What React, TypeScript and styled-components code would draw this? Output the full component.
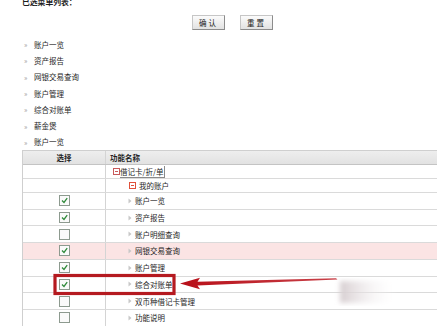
import React from "react";
import styled, { createGlobalStyle } from "styled-components";

const Global = createGlobalStyle`
  html, body { margin: 0; padding: 0; background: #fff; }
  body {
    font-family: "Noto Sans CJK SC", "DejaVu Sans", sans-serif;
    font-size: 7.5px;
    color: #1e1e1e;
    overflow: hidden;
  }
`;

const Page = styled.div`
  position: relative;
  width: 437px;
  height: 326px;
  overflow: hidden;
  padding-left: 22px;
  box-sizing: border-box;
`;

const Title = styled.div`
  margin-top: -3px;
  height: 10px;
  line-height: 10px;
  font-weight: 700;
  font-size: 7.8px;
`;

const ButtonRow = styled.div`
  display: flex;
  gap: 15px;
  margin-top: 8px;
  padding-left: 170px;
`;

const Btn = styled.button`
  width: 33px;
  height: 15px;
  padding: 0;
  font-family: inherit;
  font-size: 7.5px;
  letter-spacing: 2px;
  color: #222;
  background: linear-gradient(#fbfbfb, #e2e2e2);
  border: 1px solid #c6c6c6;
  border-right-color: #8c8c8c;
  border-bottom-color: #8c8c8c;
  line-height: 13px;
`;

const List = styled.ul`
  list-style: none;
  margin: 6px 0 0;
  padding: 0;
`;

const ListItem = styled.li`
  display: flex;
  align-items: center;
  height: 16.3px;
  gap: 5px;
  padding-left: 2px;
`;

const Bullet = styled.span`
  color: #9a9a9a;
  font-size: 7px;
  width: 5px;
`;

const Table = styled.div`
  width: 520px;
  border-top: 1px solid #cfcfcf;
  border-left: 1px solid #cfcfcf;
`;

const Row = styled.div<{ $h: number; $pink?: boolean; $head?: boolean }>`
  display: grid;
  grid-template-columns: 83px 1fr;
  height: ${(p) => p.$h}px;
  border-bottom: 1px solid ${(p) => (p.$head ? "#c4c4c4" : "#dadada")};
  background: ${(p) =>
    p.$head ? "linear-gradient(#eeeeee, #e2e2e2)" : p.$pink ? "#fbe4e4" : "#fff"};
  font-weight: ${(p) => (p.$head ? 700 : 400)};
`;

const SelCell = styled.div`
  display: flex;
  align-items: center;
  justify-content: center;
  border-right: 1px solid #d4d4d4;
`;

const NameCell = styled.div<{ $indent: number; $gap?: number }>`
  display: flex;
  align-items: center;
  padding-left: ${(p) => p.$indent}px;
  gap: ${(p) => (p.$gap ?? 3)}px;
  white-space: nowrap;
`;

const Check = styled.span`
  width: 9px;
  height: 9px;
  border: 1px solid #8d9a8f;
  background: #fafafa;
  display: flex;
  align-items: center;
  justify-content: center;
`;

const Focused = styled.span`
  border: 1px solid #8a8a8a;
  border-left: none;
  border-top: none;
  padding-right: 1px;
  line-height: 11px;
`;

const Overlay = styled.svg`
  position: absolute;
  left: 0;
  top: 0;
  pointer-events: none;
`;

const Minus = ({ color }: { color: string }) => (
  <svg width="7" height="7" viewBox="0 0 7 7">
    <rect x="0.5" y="0.5" width="6" height="6" fill="#fff" stroke={color} />
    <line x1="2" y1="3.5" x2="5" y2="3.5" stroke={color} />
  </svg>
);

const Tri = () => (
  <svg width="4" height="6" viewBox="0 0 4 6">
    <path d="M0.5 0.5 L3.5 3 L0.5 5.5 Z" fill="#c8c8c8" />
  </svg>
);

const CheckBox = ({ on }: { on: boolean }) => (
  <Check>
    {on && (
      <svg width="7" height="7" viewBox="0 0 7 7">
        <path d="M1 3.5 L3 5.5 L6.2 1.2" fill="none" stroke="#2f8a3a" strokeWidth="1.3" />
      </svg>
    )}
  </Check>
);

const menu = ["账户一览", "资产报告", "网银交易查询", "账户管理", "综合对账单", "薪金煲", "账户一览"];

const rows: { on: boolean; name: string; pink?: boolean }[] = [
  { on: true, name: "账户一览" },
  { on: true, name: "资产报告" },
  { on: false, name: "账户明细查询" },
  { on: true, name: "网银交易查询", pink: true },
  { on: true, name: "账户管理" },
  { on: true, name: "综合对账单" },
  { on: false, name: "双币种借记卡管理" },
  { on: false, name: "功能说明" },
];

export default function App() {
  return (
    <>
      <Global />
      <Page>
        <Title>已选菜单列表：</Title>
        <ButtonRow>
          <Btn>确认</Btn>
          <Btn>重置</Btn>
        </ButtonRow>
        <List>
          {menu.map((m, i) => (
            <ListItem key={i}>
              <Bullet>»</Bullet>
              <span>{m}</span>
            </ListItem>
          ))}
        </List>
        <Table>
          <Row $h={13} $head>
            <SelCell>选择</SelCell>
            <NameCell $indent={4}>功能名称</NameCell>
          </Row>
          <Row $h={13}>
            <SelCell />
            <NameCell $indent={7} $gap={0}>
              <Minus color="#c85a5a" />
              <Focused>借记卡/折/单</Focused>
            </NameCell>
          </Row>
          <Row $h={13}>
            <SelCell />
            <NameCell $indent={23}>
              <Minus color="#e0503a" />
              <span>我的账户</span>
            </NameCell>
          </Row>
          {rows.map((r, i) => (
            <Row key={i} $h={15.7} $pink={r.pink}>
              <SelCell>
                <CheckBox on={r.on} />
              </SelCell>
              <NameCell $indent={22}>
                <Tri />
                <span>{r.name}</span>
              </NameCell>
            </Row>
          ))}
        </Table>
        <Overlay width="437" height="326" viewBox="0 0 437 326">
          <defs>
            <linearGradient id="shaft" x1="0" x2="1" y1="0" y2="0">
              <stop offset="0" stopColor="#b80f18" />
              <stop offset="1" stopColor="#c84048" />
            </linearGradient>
            <linearGradient id="smear" x1="0" x2="1" y1="0" y2="0">
              <stop offset="0" stopColor="#d6cdd0" />
              <stop offset="1" stopColor="#ffffff" stopOpacity="0" />
            </linearGradient>
            <filter id="blur">
              <feGaussianBlur stdDeviation="2.5" />
            </filter>
          </defs>
          <rect x="340" y="281" width="58" height="22" fill="url(#smear)" filter="url(#blur)" />
          <rect x="55" y="275.5" width="119" height="18" fill="none" stroke="#b51a20" strokeWidth="3.2" />
          <path d="M180 283.5 L200 277.8 L197.5 281.8 L336 278.2 L337.5 279.6 L197.5 285.6 L200 289.2 Z" fill="url(#shaft)" />
        </Overlay>
      </Page>
    </>
  );
}
